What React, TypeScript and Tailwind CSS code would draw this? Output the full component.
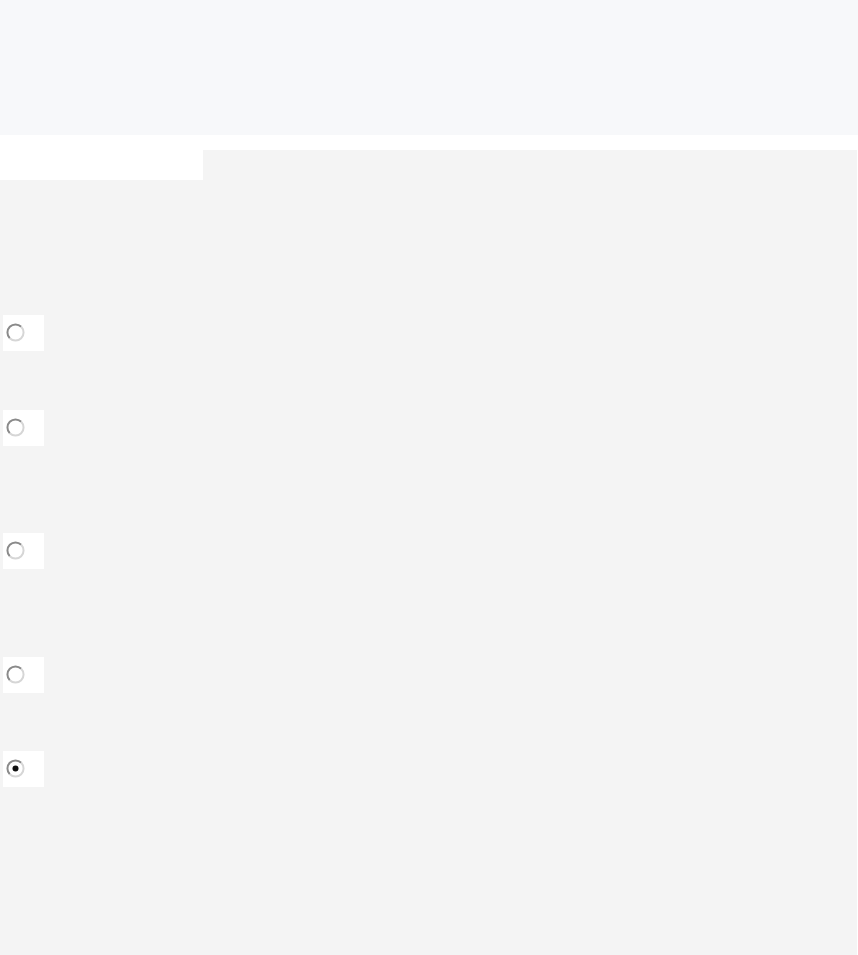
import React from 'react';

function RadioMark({ checked }: { checked?: boolean }) {
  return (
    <svg width="19" height="19" viewBox="0 0 19 19" xmlns="http://www.w3.org/2000/svg">
      <circle cx="9.5" cy="9.5" r="8" fill="#ffffff" />
      {/* dark upper-left half of the ring */}
      <path d="M15.2 3.8 A8 8 0 0 0 3.8 15.2" fill="none" stroke="#8a8a8a" strokeWidth="2" />
      {/* light lower-right half */}
      <path d="M3.8 15.2 A8 8 0 0 0 15.2 3.8" fill="none" stroke="#d6d6d6" strokeWidth="2" />
      {checked && <circle cx="9.5" cy="9.5" r="3" fill="#111111" />}
    </svg>
  );
}

function RadioBox({ checked, className }: { checked?: boolean; className: string }) {
  return (
    <div className={`ml-[3px] w-[41px] h-[36px] bg-white pl-[3px] pt-[8px] ${className}`}>
      <RadioMark checked={checked} />
    </div>
  );
}

export default function App() {
  return (
    <div className="w-[858px] h-[955px] flex flex-col overflow-hidden" style={{ fontFamily: '"Liberation Sans", Arial, sans-serif' }}>
      {/* Top bar */}
      <div className="h-[135px] shrink-0 bg-[#f7f8fa]" />
      <div className="h-[15px] shrink-0 bg-white" />

      {/* Main */}
      <div className="flex-1 bg-[#f4f4f4] flex flex-col border-r border-white">
        <div className="w-[203px] h-[30px] bg-white" />

        <RadioBox className="mt-[135px]" />
        <RadioBox className="mt-[59px]" />
        <RadioBox className="mt-[87px]" />
        <RadioBox className="mt-[88px]" />
        <RadioBox className="mt-[58px]" checked />
      </div>
    </div>
  );
}
